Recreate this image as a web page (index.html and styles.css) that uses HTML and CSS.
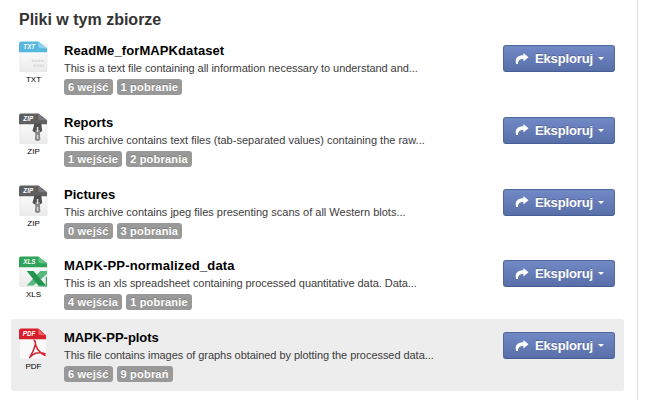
FILE: index.html
```html
<!DOCTYPE html>
<html lang="pl">
<head>
<meta charset="utf-8">
<title>Pliki w tym zbiorze</title>
<link rel="stylesheet" href="styles.css">
</head>
<body>
<svg width="0" height="0" class="defs">
  <defs>
    <linearGradient id="paper" x1="0" y1="0" x2="0" y2="1"><stop offset="0" stop-color="#fff"/><stop offset="1" stop-color="#ebebeb"/></linearGradient>
    <symbol id="share" viewBox="0 0 14 12"><path d="M8.400 0 13.500 4.200 8.400 8.500V6C5 6 3 7 2.900 11H1.300C-0.600 6 2 2.300 8.400 2.300Z" fill="#fff"/></symbol>
    <symbol id="zip" viewBox="0 0 30 32">
      <path d="M1 3H29V31H1Z" fill="url(#paper)" stroke="#e4e4e4" stroke-width=".6"/>
      <path d="M2 0H20L29 7V11H0V2Q0 0 2 0Z" fill="#5f5f5f"/>
      <path d="M20 0 29 7H22Q20 7 20 5Z" fill="#777"/>
      <path d="M16 10H23L24 18L21 20H17L14 18Z" fill="#505050"/>
      <path d="M17 17H21.500L22 27Q19 30 16.500 27Z" fill="#888"/><path d="M19.200 14V19M19.200 22V26" stroke="#ddd" stroke-width="1.500"/>
      <text x="4.500" y="8.200" class="tag">ZIP</text>
    </symbol>
  </defs>
</svg>
<main class="panel">
  <h1 class="heading">Pliki w tym zbiorze</h1>
  <ul class="files">
    <li class="file txt">
      <div class="kind">
        <svg class="icon" viewBox="0 0 30 32"><path d="M1 3H29V31H1Z" fill="url(#paper)" stroke="#e4e4e4" stroke-width=".6"/><path d="M2 0H20L29 7V11H0V2Q0 0 2 0Z" fill="#56b8de"/><path d="M20 0 29 7H22Q20 7 20 5Z" fill="#8bd3ee"/><path d="M13 20H26M15 25H26" stroke="#dcdcdc" stroke-width="2.500" stroke-dasharray="2.500 .6"/><text x="4.500" y="8.200" class="tag">TXT</text></svg>
        <span class="ext">TXT</span>
      </div>
      <div class="info"><h2 class="name">ReadMe_forMAPKdataset</h2><p class="desc">This is a text file containing all information necessary to understand and...</p><div class="badges"><span class="badge">6 wejść</span><span class="badge">1 pobranie</span></div></div>
      <button class="explore"><svg class="share"><use href="#share"/></svg>Eksploruj<i class="caret"></i></button>
    </li>
    <li class="file">
      <div class="kind"><svg class="icon"><use href="#zip"/></svg><span class="ext">ZIP</span></div>
      <div class="info"><h2 class="name">Reports</h2><p class="desc">This archive contains text files (tab-separated values) containing the raw...</p><div class="badges"><span class="badge">1 wejście</span><span class="badge">2 pobrania</span></div></div>
      <button class="explore"><svg class="share"><use href="#share"/></svg>Eksploruj<i class="caret"></i></button>
    </li>
    <li class="file">
      <div class="kind"><svg class="icon"><use href="#zip"/></svg><span class="ext">ZIP</span></div>
      <div class="info"><h2 class="name">Pictures</h2><p class="desc">This archive contains jpeg files presenting scans of all Western blots...</p><div class="badges"><span class="badge">0 wejść</span><span class="badge">3 pobrania</span></div></div>
      <button class="explore"><svg class="share"><use href="#share"/></svg>Eksploruj<i class="caret"></i></button>
    </li>
    <li class="file xls">
      <div class="kind">
        <svg class="icon" viewBox="0 0 30 32"><path d="M1 3H29V31H1Z" fill="url(#paper)" stroke="#e4e4e4" stroke-width=".6"/><path d="M2 0H20L29 7V11H0V2Q0 0 2 0Z" fill="#2fa35a"/><path d="M20 0 29 7H22Q20 7 20 5Z" fill="#5cc583"/><path d="M22 15H29V18L15 30H8Z" fill="#55ba7a"/><path d="M8 15H15L28 30H20Z" fill="#23944d"/><path d="M28.300 21V30.300H20" fill="none" stroke="#2fa35a" stroke-width="1.200"/><text x="4.500" y="8.200" class="tag">XLS</text></svg>
        <span class="ext">XLS</span>
      </div>
      <div class="info"><h2 class="name">MAPK-PP-normalized_data</h2><p class="desc">This is an xls spreadsheet containing processed quantitative data. Data...</p><div class="badges"><span class="badge">4 wejścia</span><span class="badge">1 pobranie</span></div></div>
      <button class="explore"><svg class="share"><use href="#share"/></svg>Eksploruj<i class="caret"></i></button>
    </li>
    <li class="file pdf active">
      <div class="kind">
        <svg class="icon" viewBox="0 0 30 32"><path d="M1 3H28V31H1Z" fill="#fafafa"/><path d="M2 0H20L28 7V11H0V2Q0 0 2 0Z" fill="#d6202b"/><path d="M20 0 28 7H22Q20 7 20 5Z" fill="#ee5b60"/><path d="M15.500 12C19 13 16 22 11 30M16.500 13C17 20 21 25 27 28M11 30C15 25 21 24 27 26" fill="none" stroke="#d3222e" stroke-width="1.500" stroke-linecap="round"/><text x="4" y="8.200" class="tag">PDF</text></svg>
        <span class="ext">PDF</span>
      </div>
      <div class="info"><h2 class="name">MAPK-PP-plots</h2><p class="desc">This file contains images of graphs obtained by plotting the processed data...</p><div class="badges"><span class="badge">6 wejść</span><span class="badge">9 pobrań</span></div></div>
      <button class="explore"><svg class="share"><use href="#share"/></svg>Eksploruj<i class="caret"></i></button>
    </li>
  </ul>
</main>
</body>
</html>
```
FILE: styles.css
```css
* { box-sizing: border-box; }
body { margin: 0; background: #fff; color: #333; font-family: "Liberation Sans", Arial, sans-serif; }
.defs { display: block; }
.panel { width: 638px; height: 400px; padding: 10px 13px 0 11px; border-right: 1px solid #ddd; overflow: hidden; }
.heading { margin: 0 0 2px; padding-left: 8px; font-size: 16px; line-height: 20px; height: 20px; }
.files { margin: 0; padding: 0; list-style: none; }
.file { display: flex; align-items: flex-start; height: 71.75px; padding: 9px 9px 0 8px; border-radius: 3px; }
.active { background: #ededed; }
.kind { width: 45px; flex: none; }
.icon { display: block; width: 29px; height: 32px; }
.tag { font: italic bold 6.5px "Liberation Sans", sans-serif; fill: #fff; }
.ext { display: block; width: 29px; margin-top: 1px; font-size: 8px; line-height: 11px; text-align: center; color: #000; }
.info { flex: 1; white-space: nowrap; }
.name { margin: 0; font-size: 13px; line-height: 20px; color: #000; }
.desc { margin: 0; font-size: 11px; line-height: 16px; margin-top: -1px; padding-top: 0; color: #3c3c3c; }
.txt .name { letter-spacing: .1px; }
.xls .name { letter-spacing: .17px; }
.pdf .name { letter-spacing: -.05px; }
.txt .desc, .xls .desc, .pdf .desc { letter-spacing: -.05px; }
.badges { display: flex; gap: 4px; margin-top: 3px; }
.badge { height: 16px; padding: 0 4px; border-radius: 3px; background: #999; color: #fff; font-size: 11px; font-weight: bold; line-height: 16px; letter-spacing: .2px; text-shadow: 0 -1px 0 rgba(0,0,0,.2); }
.explore { display: flex; align-items: center; flex: none; width: 112px; height: 27px; margin: 4px 0 0; padding: 0 0 0 11px; border: 1px solid #52679e; border-bottom-color: #465c94; border-radius: 3px; background: linear-gradient(#7189c5, #586fa9); color: #fff; font: bold 13px "Liberation Sans", Arial, sans-serif; letter-spacing: -.15px; text-shadow: 0 -1px 0 rgba(0,0,0,.2); }
.share { flex: none; width: 14px; height: 12px; margin-right: 6px; }
.caret { margin-left: 5px; border: 3px solid transparent; border-top-color: #fff; border-bottom: 0; }
```
